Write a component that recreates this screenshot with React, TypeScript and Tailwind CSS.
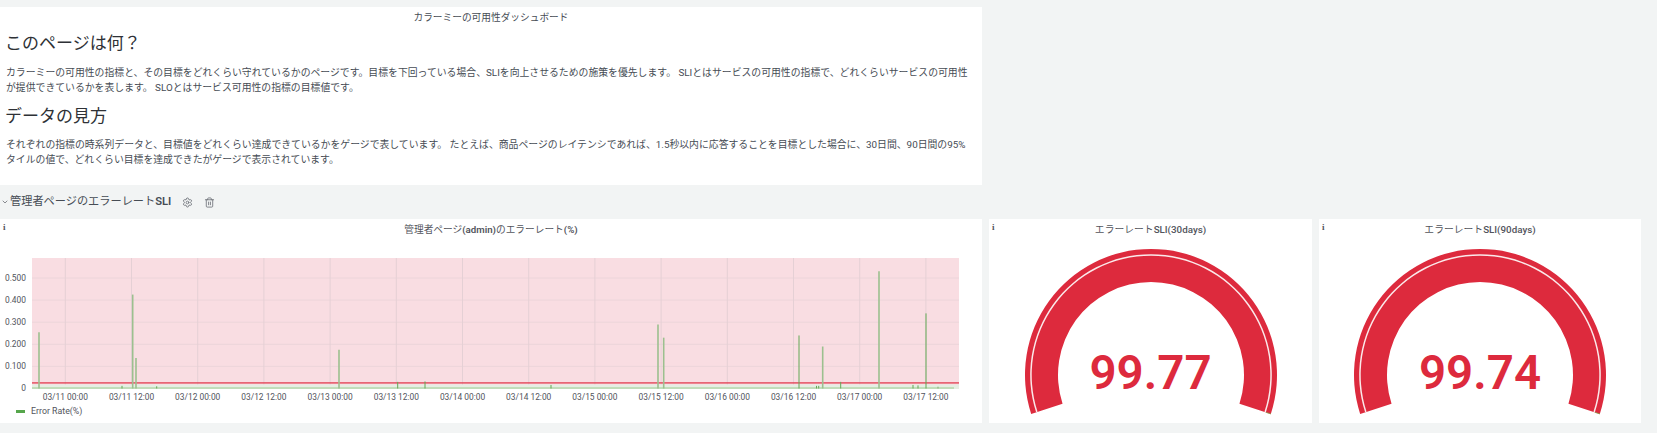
import { Settings, Trash2, ChevronDown } from "lucide-react";

const CJK = "font-['Roboto','Noto_Sans_CJK_JP',sans-serif]";

const grid = [65.3, 131.5, 197.7, 263.9, 330.1, 396.3, 462.5, 528.7, 594.9, 661.1, 727.3, 793.5, 859.7, 925.9];
const labels = ["03/11 00:00","03/11 12:00","03/12 00:00","03/12 12:00","03/13 00:00","03/13 12:00","03/14 00:00","03/14 12:00","03/15 00:00","03/15 12:00","03/16 00:00","03/16 12:00","03/17 00:00","03/17 12:00"];
const spikes: [number, number, number][] = [[39,.255,0],[122,.012,1],[132.7,.425,0],[136,.138,0],[156.7,.01,1],[339,.175,0],[397.7,.03,1],[425,.032,1],[551,.016,1],[658,.29,0],[663.7,.23,0],[799,.24,1],[816.5,.012,1],[818.7,.012,1],[822.7,.19,0],[840.7,.03,1],[879,.53,0],[913,.016,1],[918,.014,1],[926,.34,1],[938,.008,0]];
const zeroY = 388.5 - 238;
const yOf = (v: number) => zeroY - v * 221;

function Chart() {
  return (
    <svg width="982" height="168" className="block" viewBox="0 0 982 168">
      <rect x="32" y="20" width="927" height="131" fill="#f9dde2" />
      {[0.1,0.2,0.3,0.4,0.5].map(v => <line key={v} x1="32" x2="959" y1={yOf(v)} y2={yOf(v)} stroke="#ecd5da" strokeWidth="1" />)}
      {grid.map(x => <line key={x} x1={x} x2={x} y1="20" y2="151" stroke="#e5d0d5" strokeWidth="1" />)}
      <rect x="32" y="146.5" width="927" height="4.5" fill="#e6eee3" />
      <rect x="32" y="144.2" width="927" height="1.4" fill="#e3495a" />
      <rect x="32" y="149.4" width="922" height="1.2" fill="#a9d3a0" />
      {spikes.map(([x,v,dark]) => (
        <line key={x} x1={x} x2={x} y1={yOf(v)} y2={zeroY} stroke={dark ? "#63a855" : "#9cc08f"} strokeWidth={dark ? 1 : 1.6} />
      ))}
      {[0,0.1,0.2,0.3,0.4,0.5].map(v => (
        <text key={v} x="26" y={yOf(v) + 2.5} textAnchor="end" fontSize="8.4" fill="#52545c" fontFamily="Roboto, sans-serif">{v === 0 ? "0" : v.toFixed(3)}</text>
      ))}
      {labels.map((l,i) => (
        <text key={l} x={grid[i]} y="162" textAnchor="middle" fontSize="8.4" fill="#52545c" fontFamily="Roboto, sans-serif">{l}</text>
      ))}
    </svg>
  );
}

function arc(r: number, a: number) {
  const t = a * Math.PI / 180;
  return [126 + r * Math.cos(t), 126 - r * Math.sin(t)];
}
function band(r1: number, r2: number) {
  const [ax,ay] = arc(r2, 198), [bx,by] = arc(r2, -18), [cx,cy] = arc(r1, -18), [dx,dy] = arc(r1, 198);
  return `M${ax} ${ay}A${r2} ${r2} 0 1 1 ${bx} ${by}L${cx} ${cy}A${r1} ${r1} 0 1 0 ${dx} ${dy}Z`;
}

function Gauge({ pre, latin, value, w }: { pre: string; latin: string; value: string; w: string }) {
  const [gx1, gy1] = arc(121, -18);
  const [gx2, gy2] = arc(126, -18);
  return (
    <div className={`relative ${w} h-full bg-white`}>
      <Info />
      <div className="pt-[3px] text-center text-[9.8px] leading-[16px] text-[#52545c]">{pre}<span className="font-medium">{latin}</span></div>
      <div className="flex justify-center pt-[11px]">
        <svg width="252" height="166" viewBox="0 0 252 166" className="block">
          <path d={band(93, 126)} fill="#dd2a3d" />
          <path d={band(119.3, 120.8)} fill="#fbe9ea" />
          <line x1={gx1} y1={gy1} x2={gx2} y2={gy2} stroke="#7f9a45" strokeWidth="0.8" />
        </svg>
      </div>
      <div className="absolute left-0 right-0 top-[126px] text-center text-[47.5px] leading-[56px] font-semibold text-[#dd2a3d] font-['Roboto',sans-serif]">{value}</div>
    </div>
  );
}

function Info() {
  return <div className="absolute left-[3px] top-[2px] text-[9px] leading-[12px] font-bold text-[#52545c] font-['Liberation_Serif',serif]">i</div>;
}

export default function App() {
  return (
    <div className={`w-[1657px] h-[433px] overflow-hidden bg-[#f2f4f4] pt-[7px] ${CJK}`}>
      <div className="w-[982px] h-[178px] bg-white">
        <div className="pt-[3px] text-center text-[9.7px] leading-[16px] text-[#464c54]">カラーミーの可用性ダッシュボード</div>
        <div className="pl-[6px] pr-[8px] text-[#464c54]">
          <h1 className="mt-[5px] -ml-[1px] text-[17px] leading-[24px] font-normal text-[#2e3136]">このページは何？</h1>
          <p className="mt-[11px] text-[9.85px] leading-[14.5px]">カラーミーの可用性の指標と、その目標をどれくらい守れているかのページです。目標を下回っている場合、SLIを向上させるための施策を優先します。 SLIとはサービスの可用性の指標で、どれくらいサービスの可用性が提供できているかを表します。 SLOとはサービス可用性の指標の目標値です。</p>
          <h1 className="mt-[9px] -ml-[1px] text-[17px] leading-[24px] font-normal text-[#2e3136]">データの見方</h1>
          <p className="mt-[10px] text-[9.85px] leading-[14.5px]">それぞれの指標の時系列データと、目標値をどれくらい達成できているかをゲージで表しています。 たとえば、商品ページのレイテンシであれば、1.5秒以内に応答することを目標とした場合に、30日間、90日間の95%タイルの値で、どれくらい目標を達成できたがゲージで表示されています。</p>
        </div>
      </div>
      <div className="h-[34px] flex items-center pl-[1px] text-[#464c54]">
        <ChevronDown size={8} strokeWidth={2} color="#52545c" className="mr-[1px]" />
        <span className="text-[11.2px]">管理者ページのエラーレート<span className="font-semibold">SLI</span></span>
        <Settings size={11} strokeWidth={1.8} color="#6b6f76" className="ml-[11px]" />
        <Trash2 size={11} strokeWidth={1.8} color="#6b6f76" className="ml-[11px]" />
      </div>
      <div className="flex h-[204px] gap-[7px]">
        <div className="relative w-[982px] h-full bg-white flex flex-col">
          <Info />
          <div className="pt-[3px] text-center text-[9.7px] leading-[16px] text-[#52545c]">管理者ページ<span className="font-semibold">(admin)</span>のエラーレート<span className="font-semibold">(%)</span></div>
          <Chart />
          <div className="-mt-[2px] flex items-center gap-[6px] pl-[16px] text-[8.8px] leading-[14px] text-[#52545c]">
            <span className="w-[9px] h-[3px] bg-[#56a64b]" />Error Rate(%)
          </div>
        </div>
        <Gauge pre="エラーレート" latin="SLI(30days)" value="99.77" w="w-[323px]" />
        <Gauge pre="エラーレート" latin="SLI(90days)" value="99.74" w="w-[322px]" />
      </div>
    </div>
  );
}
